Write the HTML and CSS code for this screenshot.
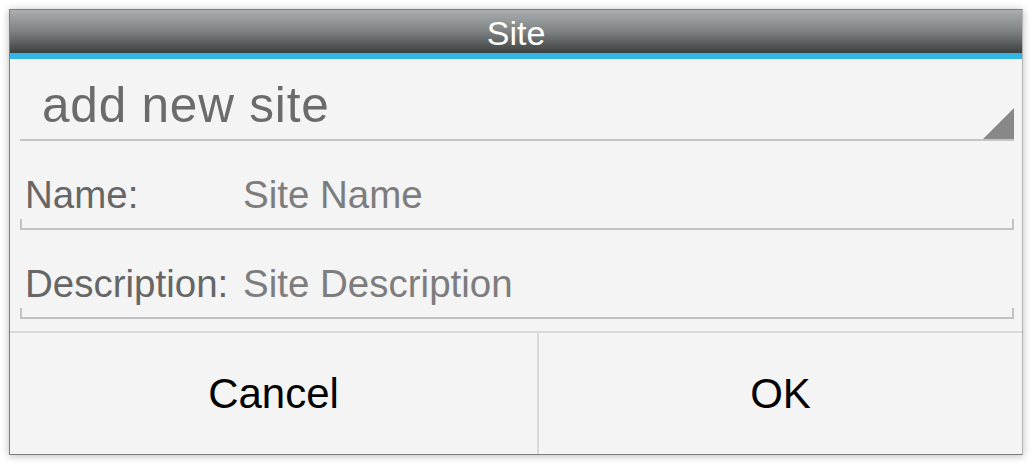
FILE: index.html
```html
<!DOCTYPE html>
<html lang="en">
<head>
  <meta charset="UTF-8" />
  <title>Site</title>
  <link rel="stylesheet" href="styles.css">
</head>
<body>
  <div class="dialog">
    <div class="dialog-title">Site</div>
    <div class="dialog-accent"></div>

    <div class="dialog-content">
      <div class="spinner">
        <span class="spinner-text">add new site</span>
        <span class="spinner-arrow"></span>
      </div>

      <div class="field">
        <div class="field-row">
          <span class="field-label">Name:</span>
          <span class="field-input">Site Name</span>
        </div>
        <div class="field-line"></div>
      </div>

      <div class="field">
        <div class="field-row">
          <span class="field-label">Description:</span>
          <span class="field-input">Site Description</span>
        </div>
        <div class="field-line"></div>
      </div>
    </div>

    <div class="dialog-buttons">
      <button class="dialog-btn btn-cancel">Cancel</button>
      <button class="dialog-btn btn-ok">OK</button>
    </div>
  </div>
</body>
</html>
```

FILE: styles.css
```css
body {
  font-family: 'Liberation Sans', Arial, sans-serif;
  background-color: #ffffff;
  margin: 0;
  padding: 9px;
}

.dialog {
  width: 1014px;
  height: 446px;
  box-sizing: border-box;
  display: flex;
  flex-direction: column;
  background-color: #f4f4f4;
  border: 1px solid #7c7f80;
  border-right-color: #b5b5b5;
  box-shadow: 0 1px 8px rgba(0, 0, 0, 0.28);
}

.dialog-title {
  height: 43px;
  line-height: 46px;
  text-align: center;
  color: #ffffff;
  font-size: 34px;
  background: linear-gradient(to bottom, #abafb1 0%, #7c8182 50%, #3c403f 100%);
}

.dialog-accent {
  height: 6px;
  background-color: #33b5e5;
}

.dialog-content {
  padding: 0 8px 0 10px;
  height: 274px;
  box-sizing: border-box;
  border-bottom: 2px solid #dadada;
}

.spinner {
  height: 80px;
  display: flex;
  align-items: flex-end;
  justify-content: space-between;
  border-bottom: 2px solid #c4c4c4;
}

.spinner-text {
  font-size: 49.5px;
  letter-spacing: 0.8px;
  line-height: 50px;
  color: #6b6b6b;
  padding-left: 22px;
  margin-bottom: 9px;
}

.spinner-arrow {
  width: 0;
  height: 0;
  border-left: 31px solid transparent;
  border-bottom: 31px solid #888888;
}

.field {
  padding-top: 32px;
}

.field-row {
  display: flex;
  height: 44px;
  line-height: 44px;
  font-size: 38.5px;
  padding-left: 5px;
}

.field-label {
  width: 218px;
  color: #666666;
}

.field-input {
  color: #7d7d7d;
}

.field-line {
  height: 9px;
  margin-top: 2px;
  border: 2px solid #c2c2c2;
  border-top: none;
}

.dialog-buttons {
  flex: 1;
  display: flex;
}

.dialog-btn {
  border: none;
  background: none;
  font-family: inherit;
  font-size: 42px;
  color: #000000;
  padding: 0;
  cursor: pointer;
}

.btn-cancel {
  width: 527px;
}

.btn-ok {
  flex: 1;
  border-left: 2px solid #dadada;
}
```
